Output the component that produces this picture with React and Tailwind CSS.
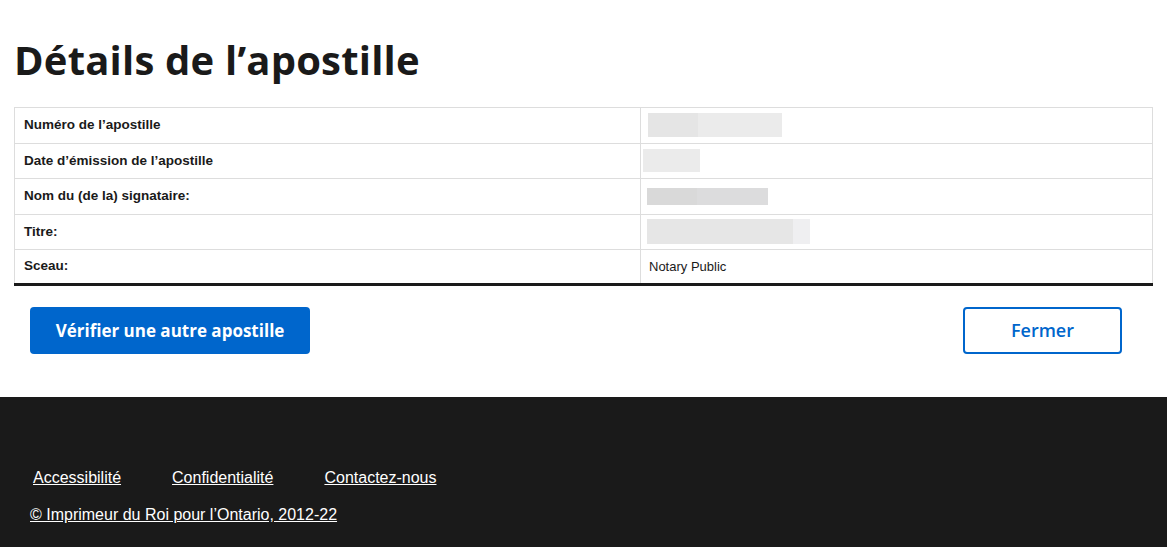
import React from 'react'

const rows = [
  { label: 'Numéro de l’apostille', blocks: [{ w: 50, c: 'bg-[#e5e5e5]' }, { w: 84, c: 'bg-[#ebebeb]' }], h: 'h-[24px]', ml: 'ml-[7px]' },
  { label: 'Date d’émission de l’apostille', blocks: [{ w: 57, c: 'bg-[#ebebeb]' }], h: 'h-[23px]', ml: 'ml-[2px]' },
  { label: 'Nom du (de la) signataire:', blocks: [{ w: 50, c: 'bg-[#d9d9d9]' }, { w: 71, c: 'bg-[#dcdcdd]' }], h: 'h-[17px]', ml: 'ml-[6px]' },
  { label: 'Titre:', blocks: [{ w: 146, c: 'bg-[#e6e6e6]' }, { w: 17, c: 'bg-[#efeff1]' }], h: 'h-[25px]', ml: 'ml-[6px]' },
]

const App = () => {
  return (
    <div className="w-[1167px] min-h-[547px] bg-white flex flex-col">
      <main className="px-[14px] pt-[36px] pb-[43px]">
        <h1 className="font-['Open_Sans',sans-serif] font-bold text-[40px] leading-[48px] tracking-[0.2px] text-[#1a1a1a] mb-[23px]">
          Détails de l’apostille
        </h1>

        <table className="w-full border-collapse font-['Liberation_Sans',Arial,sans-serif] text-[13.5px] text-[#1a1a1a] border-b-[3px] border-b-[#1a1a1a]">
          <tbody>
            {rows.map((r) => (
              <tr key={r.label} className="h-[35.5px]">
                <th className="w-[626px] text-left font-bold border border-[#dddddd] pl-[9px] py-0">{r.label}</th>
                <td className="border border-[#dddddd] p-0">
                  <div className={`flex ${r.ml} ${r.h}`}>
                    {r.blocks.map((b, i) => (
                      <div key={i} className={b.c} style={{ width: b.w }} />
                    ))}
                  </div>
                </td>
              </tr>
            ))}
            <tr className="h-[35px]">
              <th className="text-left font-bold border border-[#dddddd] border-b-0 pl-[9px] py-0">Sceau:</th>
              <td className="border border-[#dddddd] border-b-0 pl-[8px] py-0 text-[13px]">Notary Public</td>
            </tr>
          </tbody>
        </table>

        <div className="flex justify-between mt-[21px] px-[16px] pr-[31px]">
          <button className="w-[280px] h-[47px] rounded-[4px] bg-[#0066cc] text-white font-['Open_Sans',sans-serif] font-bold text-[17px]">
            Vérifier une autre apostille
          </button>
          <button className="w-[159px] h-[47px] rounded-[4px] border-2 border-[#0066cc] text-[#0066cc] font-['Open_Sans',sans-serif] font-semibold text-[18px]">
            Fermer
          </button>
        </div>
      </main>

      <footer className="flex-1 bg-[#1a1a1a] text-white font-['Liberation_Sans',Arial,sans-serif] text-[16px] pt-[69px] pb-[22px]">
        <nav className="flex gap-[51px] pl-[33px]">
          <a href="#" className="underline">Accessibilité</a>
          <a href="#" className="underline">Confidentialité</a>
          <a href="#" className="underline">Contactez-nous</a>
        </nav>
        <p className="pl-[30px] mt-[13px]">
          <a href="#" className="underline">© Imprimeur du Roi pour l’Ontario, 2012-22</a>
        </p>
      </footer>
    </div>
  )
}

export default App
